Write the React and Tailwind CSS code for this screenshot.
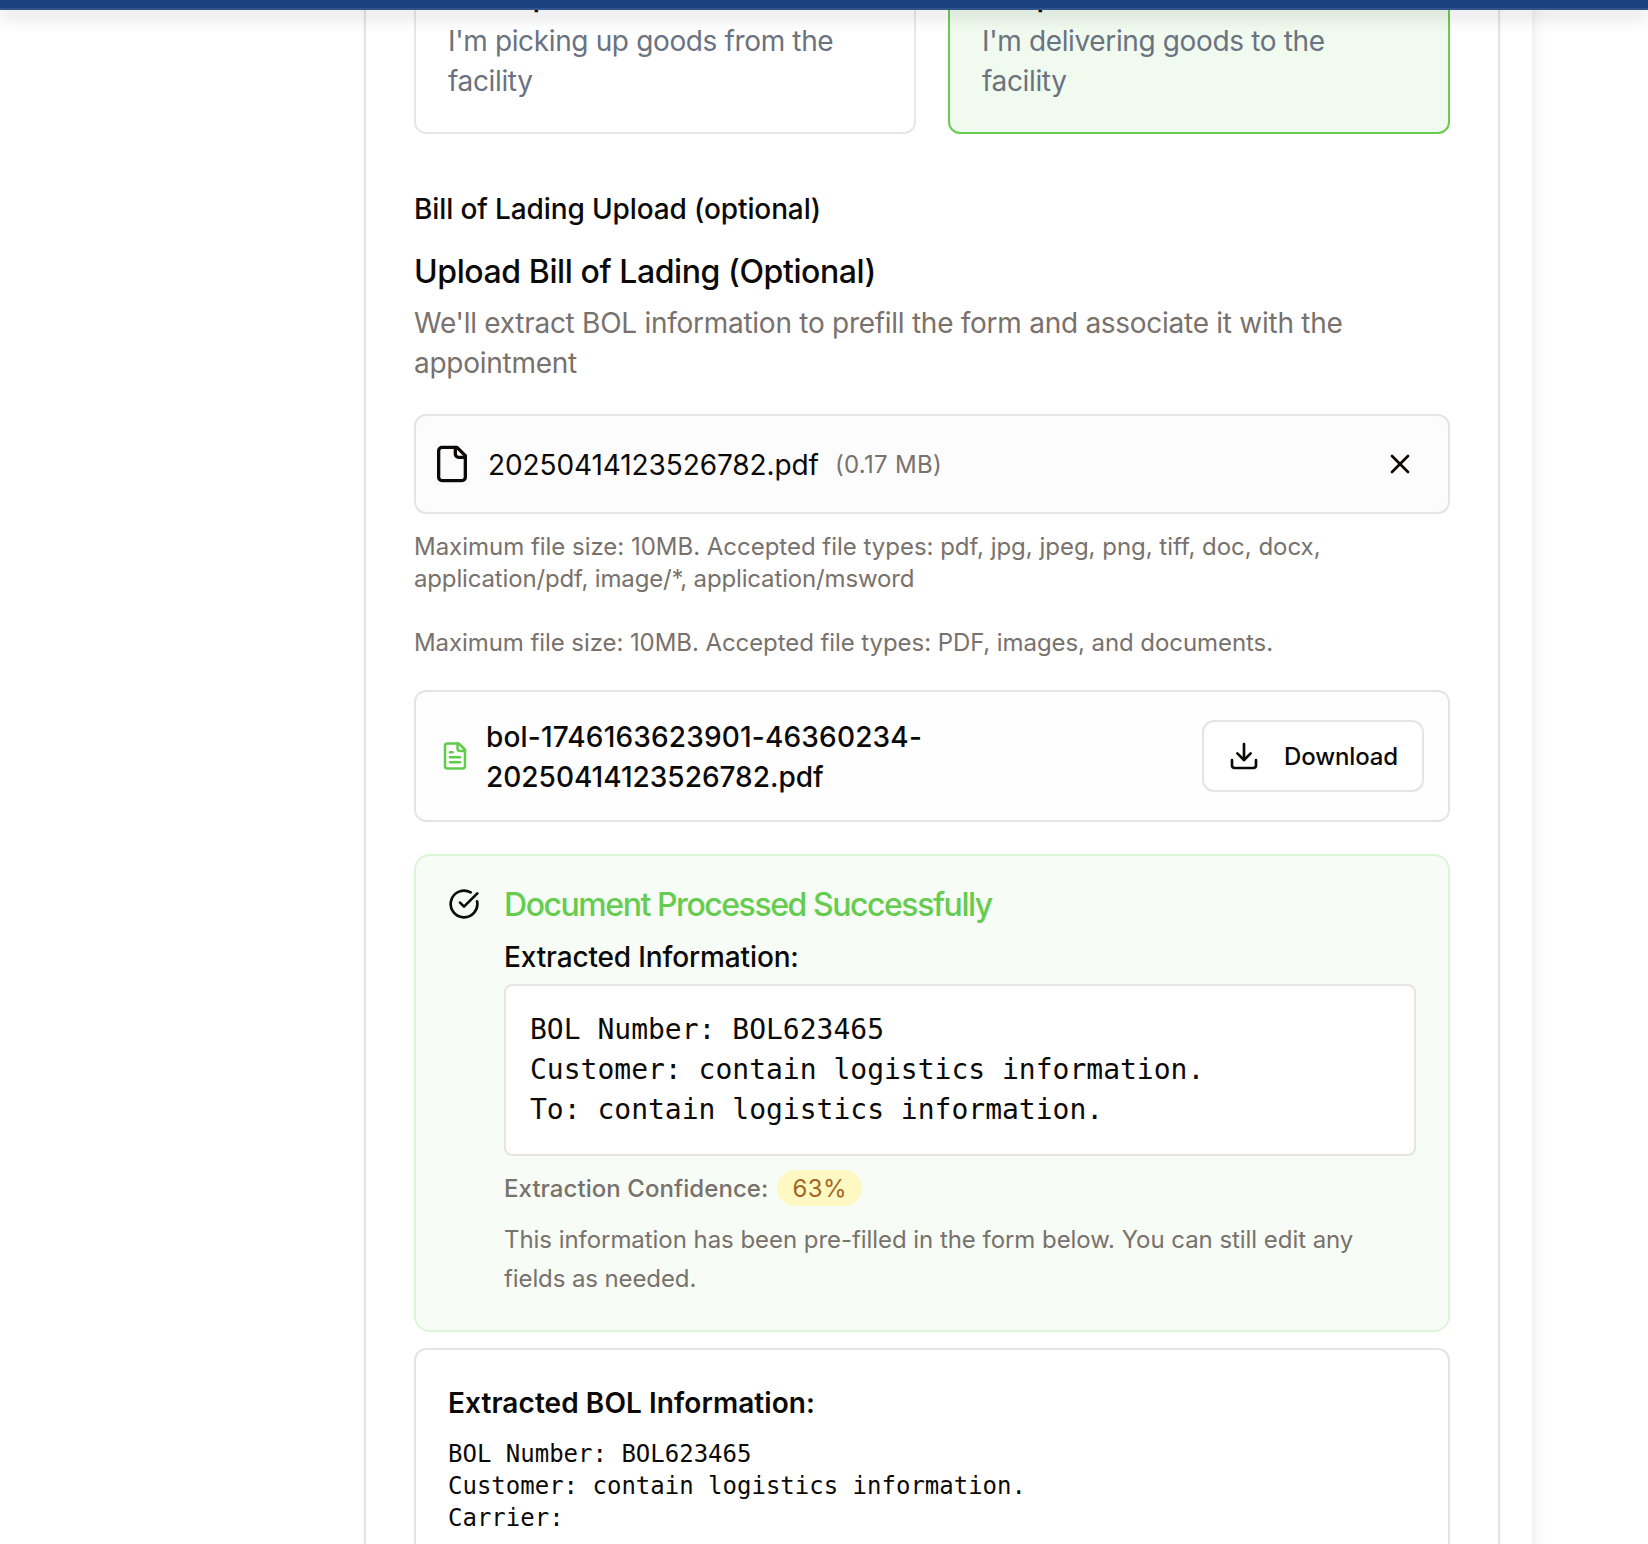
import { X, Download } from "lucide-react";

function Icon({ size, className = "", children }) {
  return (
    <svg
      width={size}
      height={size}
      viewBox="0 0 24 24"
      fill="none"
      stroke="currentColor"
      strokeWidth="2"
      strokeLinecap="round"
      strokeLinejoin="round"
      className={`shrink-0 ${className}`}
    >
      {children}
    </svg>
  );
}

function FileShape() {
  return (
    <>
      <path d="M15 2H6a2 2 0 0 0-2 2v16a2 2 0 0 0 2 2h12a2 2 0 0 0 2-2V7Z" />
      <path d="M14 2v4a2 2 0 0 0 2 2h4" />
    </>
  );
}

function TypeOption({ title, lines, selected }) {
  return (
    <div
      className={
        selected
          ? "flex-1 rounded-xl border-2 border-[#67cd4f] bg-[#f0faee] px-8 pt-[7px] pb-[31px]"
          : "flex-1 rounded-xl border-2 border-[#e5e7eb] bg-white px-8 pt-[7px] pb-[31px]"
      }
    >
      <div className="text-[32px] leading-8 font-medium">{title}</div>
      <p className="mt-[10px] text-[28px] leading-10 tracking-[-0.36px] text-[#6b7280]">
        {lines[0]}
        <br />
        {lines[1]}
      </p>
    </div>
  );
}

function UploadedFile() {
  return (
    <div className="mt-[31px] flex h-[100px] items-center rounded-xl border-2 border-[#e4e4e4] bg-[#fcfcfc] px-4">
      <Icon size={40}>
        <FileShape />
      </Icon>
      <span className="ml-4 pt-px text-[28px] leading-10 tracking-[-0.09px]">20250414123526782.pdf</span>
      <span className="ml-4 pt-0.5 text-2xl tracking-[0.32px] text-[#78716c]">(0.17 MB)</span>
      <button className="ml-auto flex size-16 items-center justify-center">
        <X size={32} strokeWidth={2} />
      </button>
    </div>
  );
}

function StoredDocument() {
  return (
    <div className="mt-[31px] flex h-[132px] items-center rounded-xl border-2 border-[#e4e4e4] bg-[#fefefe] px-6">
      <Icon size={30} className="text-[#5fcd4a]">
        <FileShape />
        <path d="M10 9H8" />
        <path d="M16 13H8" />
        <path d="M16 17H8" />
      </Icon>
      <div className="ml-4 pt-0.5 text-[28px] leading-10 font-medium">
        <div className="tracking-[0.18px]">bol-1746163623901-46360234-</div>
        <div>20250414123526782.pdf</div>
      </div>
      <button className="ml-auto flex h-[72px] w-[222px] items-center rounded-xl border-2 border-[#e4e4e4] bg-white pl-6 text-2xl font-medium tracking-[-0.12px]">
        <Download size={32} strokeWidth={2} />
        <span className="ml-6 pt-0.5">Download</span>
      </button>
    </div>
  );
}

function ProcessedAlert() {
  return (
    <div className="mt-8 flex h-[478px] rounded-2xl border-2 border-[#dcf4d8] bg-[#f7fcf6] px-8 pt-8">
      <Icon size={32}>
        <path d="M21.801 10A10 10 0 1 1 17 3.335" />
        <path d="m9 11 3 3L22 4" />
      </Icon>
      <div className="ml-6 flex-1">
        <h5 className="mt-px text-[32px] leading-8 font-medium tracking-[-1.45px] text-[#65cc50]">
          Document Processed Successfully
        </h5>
        <p className="mt-4 text-[28px] leading-10 font-medium tracking-[-0.14px]">Extracted Information:</p>
        <pre className="mt-[7px] h-[172px] rounded-lg border-2 border-[#e6e3e2] bg-white p-6 font-['DejaVu_Sans_Mono',monospace] text-[28px] leading-10">
          {"BOL Number: BOL623465\nCustomer: contain logistics information.\nTo: contain logistics information."}
        </pre>
        <div className="mt-3.5 flex h-9 items-center text-2xl text-[#78716c]">
          <span className="pt-0.5 font-medium tracking-[0.06px]">Extraction Confidence:</span>
          <span className="ml-[9px] flex h-9 w-[85px] items-center justify-center rounded-full bg-[#fef9c3] pt-0.5 tracking-[0.4px] text-[#a16621]">
            63%
          </span>
        </div>
        <p className="mt-[14px] text-2xl leading-[39px] text-[#78716c]">
          <span className="tracking-[-0.05px]">
            This information has been pre-filled in the form below. You can still edit any
          </span>
          <br />
          <span className="tracking-[-0.1px]">fields as needed.</span>
        </p>
      </div>
    </div>
  );
}

function ExtractedInfo() {
  return (
    <div className="mt-4 h-[260px] rounded-xl border-2 border-[#e4e4e4] bg-white px-8 pt-[33px]">
      <h4 className="text-[28px] leading-10 font-semibold tracking-[0.07px]">Extracted BOL Information:</h4>
      <pre className="mt-[15px] font-['DejaVu_Sans_Mono',monospace] text-2xl leading-8">
        {"BOL Number: BOL623465\nCustomer: contain logistics information.\nCarrier:"}
      </pre>
    </div>
  );
}

export default function App() {
  return (
    <div className="flex h-[1544px] w-[1648px] flex-col overflow-hidden bg-white font-['Inter',sans-serif] text-[#0c0a09]">
      <header className="relative z-10 h-[10px] shrink-0 border-b-2 border-[#32548c] bg-[#1a417f] shadow-[0_8px_16px_0_rgba(0,0,0,0.13)]" />
      <main className="-mt-10 h-[1700px] w-[1532px] shrink-0 bg-white pl-[364px] shadow-[0_8px_16px_0_rgba(0,0,0,0.1)]">
        <section className="h-[1700px] w-[1136px] border-x-2 border-[#e4e4e5] bg-white px-12 shadow-[0_2px_4px_0_rgba(0,0,0,0.05)]">
          <div className="flex gap-8">
            <TypeOption title="Pickup" lines={["I'm picking up goods from the", "facility"]} />
            <TypeOption title="Dropoff" lines={["I'm delivering goods to the", "facility"]} selected />
          </div>
          <div className="mt-[55px] text-[28px] leading-10 font-medium tracking-[-0.12px]">
            Bill of Lading Upload (optional)
          </div>
          <h3 className="mt-[19px] text-[32px] leading-[48px] font-medium tracking-[-0.41px]">
            Upload Bill of Lading (Optional)
          </h3>
          <p className="mt-[7px] text-[28px] leading-10 tracking-[-0.27px] text-[#78716c]">
            We'll extract BOL information to prefill the form and associate it with the
            <br />
            appointment
          </p>
          <UploadedFile />
          <p className="mt-[17px] text-2xl text-[#78716c]">
            <span className="tracking-[-0.02px]">
              Maximum file size: 10MB. Accepted file types: pdf, jpg, jpeg, png, tiff, doc, docx,
            </span>
            <br />
            <span className="tracking-[-0.15px]">application/pdf, image/*, application/msword</span>
          </p>
          <p className="mt-8 text-2xl tracking-[-0.075px] text-[#78716c]">
            Maximum file size: 10MB. Accepted file types: PDF, images, and documents.
          </p>
          <StoredDocument />
          <ProcessedAlert />
          <ExtractedInfo />
        </section>
      </main>
    </div>
  );
}
